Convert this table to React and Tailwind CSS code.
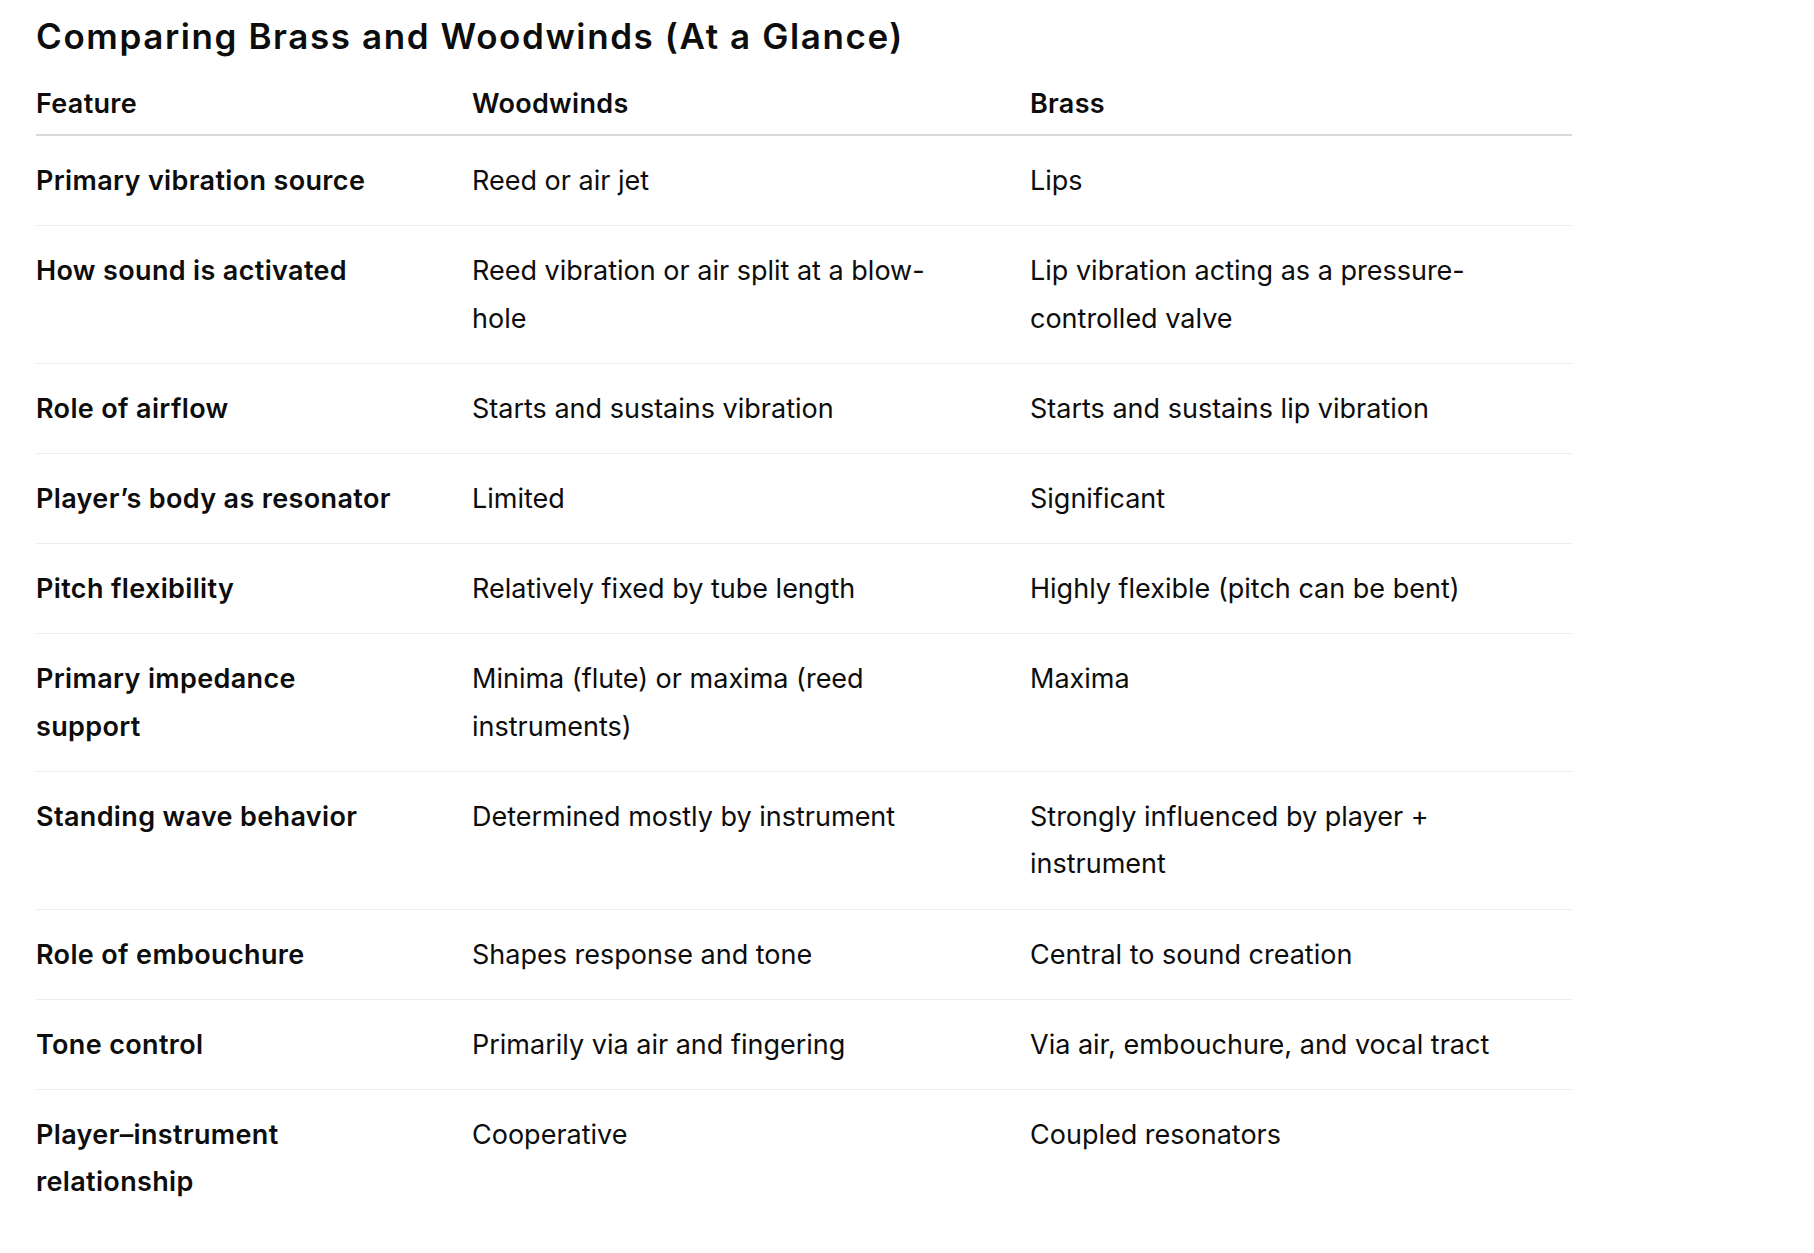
import React from "react";

const rows = [
  ["Primary vibration source", "Reed or air jet", "Lips"],
  ["How sound is activated", <>Reed vibration or air split at a blow-<br />hole</>, <>Lip vibration acting as a pressure-<br />controlled valve</>],
  ["Role of airflow", "Starts and sustains vibration", "Starts and sustains lip vibration"],
  ["Player’s body as resonator", "Limited", "Significant"],
  ["Pitch flexibility", "Relatively fixed by tube length", "Highly flexible (pitch can be bent)"],
  [<>Primary impedance<br />support</>, <>Minima (flute) or maxima (reed<br />instruments)</>, "Maxima"],
  ["Standing wave behavior", "Determined mostly by instrument", <>Strongly influenced by player +<br />instrument</>],
  ["Role of embouchure", "Shapes response and tone", "Central to sound creation"],
  ["Tone control", "Primarily via air and fingering", "Via air, embouchure, and vocal tract"],
  [<>Player–instrument<br />relationship</>, "Cooperative", "Coupled resonators"],
];

export default function App() {
  return (
    <div
      className="min-h-[1253px] w-[1814px] bg-white text-[#0d0d0d] pl-[36px] pt-[16px]"
      style={{ fontFamily: "Inter, 'Noto Sans', sans-serif" }}
    >
      <h3 className="text-[35px] leading-[40px] font-semibold tracking-[1.6px] whitespace-nowrap">
        Comparing Brass and Woodwinds (At a Glance)
      </h3>
      <table className="table-fixed w-[1536px] border-collapse mt-[23.6px] text-[27px] leading-[47.4px]">
        <colgroup>
          <col className="w-[436px]" />
          <col className="w-[558px]" />
          <col className="w-[542px]" />
        </colgroup>
        <thead>
          <tr>
            <th className="text-left font-semibold tracking-[0.3px] pb-[7px] border-b-2 border-[#d9d9d9] pr-4">Feature</th>
            <th className="text-left font-semibold tracking-[0.3px] pb-[7px] border-b-2 border-[#d9d9d9] pr-4">Woodwinds</th>
            <th className="text-left font-semibold tracking-[0.3px] pb-[7px] border-b-2 border-[#d9d9d9] pr-4">Brass</th>
          </tr>
        </thead>
        <tbody>
          {rows.map((r, i) => {
            const b = i < rows.length - 1 ? "border-b border-[#ececec]" : "";
            return (
              <tr key={i}>
                <td className={`align-top font-semibold tracking-[0.35px] pt-[21px] pb-[20.8px] pr-4 ${b}`}>{r[0]}</td>
                <td className={`align-top pt-[21px] pb-[20.8px] pr-4 ${b}`}>{r[1]}</td>
                <td className={`align-top pt-[21px] pb-[20.8px] pr-4 ${b}`}>{r[2]}</td>
              </tr>
            );
          })}
        </tbody>
      </table>
    </div>
  );
}
